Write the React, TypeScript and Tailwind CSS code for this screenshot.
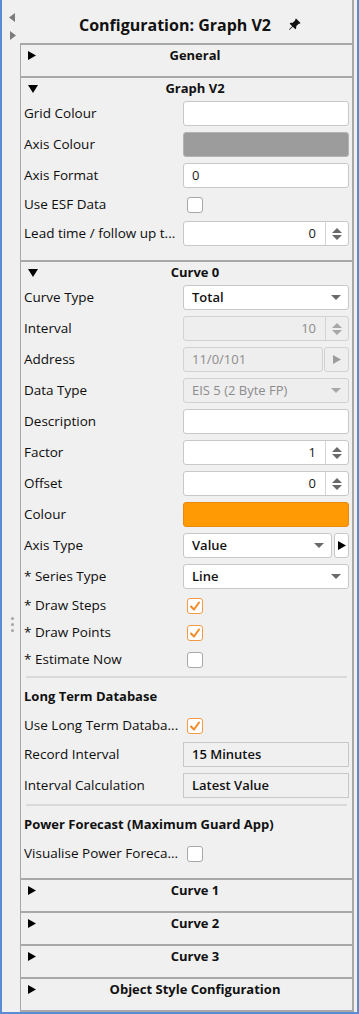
import React from "react";
import { BsPinAngleFill } from "react-icons/bs";

const FONT = "font-['Open_Sans','Noto_Sans',sans-serif]";

function TriRight({ className = "" }: { className?: string }) {
  return (
    <svg width="8" height="9" viewBox="0 0 8 9" className={className}>
      <polygon points="0,0 8,4.5 0,9" fill="currentColor" />
    </svg>
  );
}
function TriDown({ className = "" }: { className?: string }) {
  return (
    <svg width="10" height="8" viewBox="0 0 10 8" className={className}>
      <polygon points="0,0 10,0 5,8" fill="currentColor" />
    </svg>
  );
}

function Header({ title, open }: { title: string; open?: boolean }) {
  return (
    <div className="border-t-2 border-[#a8a8a8]">
      <div className="h-[21px] flex items-center">
        <div className="w-[17px] shrink-0 pl-[7px] flex items-center text-black">
          {open ? <TriDown /> : <TriRight />}
        </div>
        <div className="flex-1 text-center text-[13px] font-bold text-[#111]">{title}</div>
      </div>
      {!open && <div className="h-[10px]" />}
    </div>
  );
}

function Row({ label, children, h = "h-[25px]" }: { label: string; children?: React.ReactNode; h?: string }) {
  return (
    <div className={`flex items-center ${h}`}>
      <div className="w-[159px] shrink-0 text-[13.5px] text-[#0d0d0d] whitespace-nowrap overflow-hidden">{label}</div>
      <div className="flex-1 h-full flex items-center">{children}</div>
    </div>
  );
}

function TextBox({ value = "", align = "left" }: { value?: string; align?: "left" | "right" }) {
  return (
    <div
      className={`w-full h-full bg-white border border-[#c8c8c8] rounded-[3px] flex items-center px-[8px] text-[13px] text-[#1a1a1a] ${
        align === "right" ? "justify-end" : ""
      }`}
    >
      {value}
    </div>
  );
}

function SpinArrows({ disabled }: { disabled?: boolean }) {
  const c = disabled ? "text-[#a8a8a8]" : "text-[#6a6a6a]";
  return (
    <div className={`w-[23px] h-full border-l border-[#d4d4d4] flex flex-col items-center justify-center gap-[2px] ${c}`}>
      <svg width="10" height="5" viewBox="0 0 10 5">
        <polygon points="0,5 10,5 5,0" fill="currentColor" />
      </svg>
      <svg width="10" height="5" viewBox="0 0 10 5">
        <polygon points="0,0 10,0 5,5" fill="currentColor" />
      </svg>
    </div>
  );
}

function SpinBox({ value, disabled }: { value: string; disabled?: boolean }) {
  return (
    <div
      className={`w-full h-full border rounded-[3px] flex items-center ${
        disabled ? "bg-[#eeeeee] border-[#d2d2d2] text-[#8c8c8c]" : "bg-white border-[#c8c8c8] text-[#1a1a1a]"
      }`}
    >
      <div className="flex-1 text-right pr-[9px] text-[13px]">{value}</div>
      <SpinArrows disabled={disabled} />
    </div>
  );
}

function Select({ value, disabled }: { value: string; disabled?: boolean }) {
  return (
    <div
      className={`w-full h-full border rounded-[3px] flex items-center pl-[8px] pr-[7px] ${
        disabled ? "bg-[#eeeeee] border-[#d2d2d2] text-[#8c8c8c]" : "bg-white border-[#c8c8c8] text-[#111] font-semibold"
      }`}
    >
      <div className="flex-1 text-[13px]">{value}</div>
      <svg width="10" height="5" viewBox="0 0 10 5" className={disabled ? "text-[#a8a8a8]" : "text-[#6a6a6a]"}>
        <polygon points="0,0 10,0 5,5" fill="currentColor" />
      </svg>
    </div>
  );
}

function CheckBox({ checked }: { checked?: boolean }) {
  return (
    <div className="h-full flex items-center pl-[4px]">
      <div
        className={`w-[16px] h-[16px] rounded-[3px] bg-white border flex items-center justify-center ${
          checked ? "border-[#f39a45]" : "border-[#a8a8a8]"
        }`}
      >
        {checked && (
          <svg width="12" height="12" viewBox="0 0 12 12">
            <polyline points="2,6.5 5,9.5 10,2.5" fill="none" stroke="#f28a26" strokeWidth="2" strokeLinecap="round" strokeLinejoin="round" />
          </svg>
        )}
      </div>
    </div>
  );
}

function ReadBox({ value }: { value: string }) {
  return (
    <div className="w-full h-full border border-[#c8c8c8] bg-[#f0f0f0] flex items-center px-[8px] text-[13px] text-[#111] font-semibold">
      {value}
    </div>
  );
}

function Divider() {
  return <div className="h-[2px] bg-[#dadada] ml-[2px] mr-[2px]" />;
}

function SubHeading({ text }: { text: string }) {
  return <div className="h-[25px] flex items-center text-[13px] font-bold text-[#111] whitespace-nowrap">{text}</div>;
}

export default function App() {
  return (
    <div
      className={`${FONT} w-[359px] h-[1014px] bg-[#f0f0f0] border-l-2 border-r-2 border-b-2 border-[#5b8bd0] flex overflow-hidden`}
    >
      {/* left strip */}
      <div className="w-[18px] shrink-0 flex flex-col items-center text-[#7c7c7c]">
        <svg width="6" height="9" viewBox="0 0 6 9" className="mt-[13px] ml-[1px]">
          <polygon points="6,0 6,9 0,4.5" fill="currentColor" />
        </svg>
        <svg width="6" height="9" viewBox="0 0 6 9" className="mt-[9px] ml-[3px]">
          <polygon points="0,0 6,4.5 0,9" fill="currentColor" />
        </svg>
        <div className="mt-[577px] ml-[3px] flex flex-col gap-[3px]">
          <div className="w-[3px] h-[3px] rounded-full bg-[#a4a4a4]" />
          <div className="w-[3px] h-[3px] rounded-full bg-[#a4a4a4]" />
          <div className="w-[3px] h-[3px] rounded-full bg-[#a4a4a4]" />
        </div>
      </div>

      {/* main column */}
      <div className="flex-1 mr-[3px] border-r-2 border-[#a8a8a8] flex flex-col">
        <div className="h-[43px] shrink-0 flex items-center justify-center gap-[17px] pt-[6px] pl-[8px]">
          <span className="text-[16px] font-bold text-[#111]">Configuration: Graph V2</span>
          <BsPinAngleFill className="w-[13px] h-[13px] text-[#111]" />
        </div>

        <div className="flex-1 border-l border-[#a8a8a8] flex flex-col">
          <Header title="General" />

          <Header title="Graph V2" open />
          <div className="pl-[3px] pr-[3px] pt-[2px] pb-[14px] flex flex-col gap-[6px]">
            <Row label="Grid Colour">
              <TextBox />
            </Row>
            <Row label="Axis Colour">
              <div className="w-full h-full bg-[#9c9c9c] border border-[#b4b4b4] rounded-[3px]" />
            </Row>
            <Row label="Axis Format">
              <TextBox value="0" />
            </Row>
            <Row label="Use ESF Data" h="h-[21px]">
              <CheckBox />
            </Row>
            <Row label="Lead time / follow up t...">
              <SpinBox value="0" />
            </Row>
          </div>

          <Header title="Curve 0" open />
          <div className="pl-[3px] pr-[3px] pt-[2px] pb-[14px] flex flex-col gap-[6px]">
            <Row label="Curve Type">
              <Select value="Total" />
            </Row>
            <Row label="Interval">
              <SpinBox value="10" disabled />
            </Row>
            <Row label="Address">
              <div className="w-full h-full flex gap-[1px]">
                <div className="flex-1 h-full bg-[#eeeeee] border border-[#d2d2d2] rounded-[3px] flex items-center px-[8px] text-[13px] text-[#8c8c8c]">
                  11/0/101
                </div>
                <div className="w-[25px] h-full bg-[#eeeeee] border border-[#d2d2d2] rounded-[3px] flex items-center justify-center text-[#9c9c9c]">
                  <TriRight />
                </div>
              </div>
            </Row>
            <Row label="Data Type">
              <Select value="EIS 5 (2 Byte FP)" disabled />
            </Row>
            <Row label="Description">
              <TextBox />
            </Row>
            <Row label="Factor">
              <SpinBox value="1" />
            </Row>
            <Row label="Offset">
              <SpinBox value="0" />
            </Row>
            <Row label="Colour">
              <div className="w-full h-full bg-[#ff9a05] border border-[#e88a10] rounded-[3px]" />
            </Row>
            <Row label="Axis Type">
              <div className="w-full h-full flex gap-[2px]">
                <div className="flex-1 h-full">
                  <Select value="Value" />
                </div>
                <div className="w-[15px] h-full bg-white border border-[#c8c8c8] rounded-[3px] flex items-center justify-center text-black">
                  <TriRight />
                </div>
              </div>
            </Row>
            <Row label="* Series Type">
              <Select value="Line" />
            </Row>
            <Row label="* Draw Steps" h="h-[21px]">
              <CheckBox checked />
            </Row>
            <Row label="* Draw Points" h="h-[21px]">
              <CheckBox checked />
            </Row>
            <Row label="* Estimate Now" h="h-[21px]">
              <CheckBox />
            </Row>
            <Divider />
            <SubHeading text="Long Term Database" />
            <Row label="Use Long Term Databa..." h="h-[21px]">
              <CheckBox checked />
            </Row>
            <Row label="Record Interval">
              <ReadBox value="15 Minutes" />
            </Row>
            <Row label="Interval Calculation">
              <ReadBox value="Latest Value" />
            </Row>
            <Divider />
            <SubHeading text="Power Forecast (Maximum Guard App)" />
            <Row label="Visualise Power Foreca..." h="h-[21px]">
              <CheckBox />
            </Row>
          </div>

          <Header title="Curve 1" />
          <Header title="Curve 2" />
          <Header title="Curve 3" />
          <Header title="Object Style Configuration" />
          <div className="border-t-2 border-[#a8a8a8]" />
        </div>
      </div>
    </div>
  );
}
